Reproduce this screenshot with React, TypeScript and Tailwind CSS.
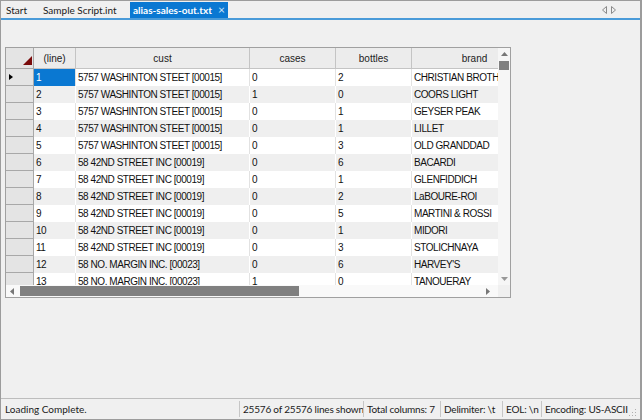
import React from "react";

type Row = [string, string, string, string, string];

const ROWS: Row[] = [
  ["1", "5757 WASHINTON STEET [00015]", "0", "2", "CHRISTIAN BROTHERS"],
  ["2", "5757 WASHINTON STEET [00015]", "1", "0", "COORS LIGHT"],
  ["3", "5757 WASHINTON STEET [00015]", "0", "1", "GEYSER PEAK"],
  ["4", "5757 WASHINTON STEET [00015]", "0", "1", "LILLET"],
  ["5", "5757 WASHINTON STEET [00015]", "0", "3", "OLD GRANDDAD"],
  ["6", "58 42ND STREET INC [00019]", "0", "6", "BACARDI"],
  ["7", "58 42ND STREET INC [00019]", "0", "1", "GLENFIDDICH"],
  ["8", "58 42ND STREET INC [00019]", "0", "2", "LaBOURE-ROI"],
  ["9", "58 42ND STREET INC [00019]", "0", "5", "MARTINI & ROSSI"],
  ["10", "58 42ND STREET INC [00019]", "0", "1", "MIDORI"],
  ["11", "58 42ND STREET INC [00019]", "0", "3", "STOLICHNAYA"],
  ["12", "58 NO. MARGIN INC. [00023]", "0", "6", "HARVEY'S"],
  ["13", "58 NO. MARGIN INC. [00023]", "1", "0", "TANQUERAY"],
];

const COLS = [
  { name: "(line)", w: "w-[42px]" },
  { name: "cust", w: "w-[174px]" },
  { name: "cases", w: "w-[86px]" },
  { name: "bottles", w: "w-[76px]" },
  { name: "brand", w: "w-[126px]" },
];

const ui = "font-['Segoe_UI',Lato,sans-serif]";
const cell = "font-['Liberation_Sans',Arial,sans-serif] text-[10px] tracking-[-0.45px]";

const Grid: React.FC = () => (
  <div className="ml-[4px] mt-[27px] w-[506px] h-[251px] border border-[#a0a0a0] bg-white flex flex-col">
    <div className="flex h-[237px]">
      <div className="w-[492px] overflow-hidden">
        <div className="flex h-[21px] w-max">
          <div className="w-[28px] shrink-0 bg-[#e4e4e4] border-r border-b border-[#a8a8a8] flex items-end justify-end pr-[1px] pb-[3px]">
            <svg width="9" height="9" viewBox="0 0 9 9">
              <polygon points="9,0 9,9 0,9" fill="#7a0b0b" />
            </svg>
          </div>
          {COLS.map((c) => (
            <div
              key={c.name}
              className={`${c.w} shrink-0 bg-[#ececec] border-r border-b border-[#c4c4c4] flex items-center justify-center text-[#222] ${cell} tracking-normal`}
            >
              {c.name}
            </div>
          ))}
        </div>
        {ROWS.map((r, i) => (
          <div key={r[0]} className={`flex h-[17px] w-max ${i % 2 ? "bg-[#efefef]" : "bg-white"}`}>
            <div className="w-[28px] shrink-0 bg-[#e4e4e4] border-r border-b border-[#a8a8a8] flex items-center pl-[3px]">
              {i === 0 && (
                <svg width="4" height="6" viewBox="0 0 4 6">
                  <polygon points="0,0 4,3 0,6" fill="#000" />
                </svg>
              )}
            </div>
            {r.map((v, j) => (
              <div
                key={j}
                className={`${COLS[j].w} shrink-0 border-r ${i % 2 ? "border-white" : "border-[#e2e2e2]"} flex items-center pl-[2px] whitespace-nowrap overflow-hidden ${cell} ${
                  i === 0 && j === 0 ? "bg-[#0a78d2] text-white" : "text-[#111]"
                }`}
              >
                {v}
              </div>
            ))}
          </div>
        ))}
      </div>
      <div className="w-[12px] bg-[#f6f6f6] flex flex-col items-center">
        <svg className="mt-[4px]" width="7" height="4" viewBox="0 0 7 4">
          <polygon points="3.5,0 7,4 0,4" fill="#777" />
        </svg>
        <div className="mt-[5px] w-[10px] h-[9px] bg-[#808080]" />
        <div className="flex-1" />
        <svg className="mb-[4px]" width="7" height="4" viewBox="0 0 7 4">
          <polygon points="0,0 7,0 3.5,4" fill="#999" />
        </svg>
      </div>
    </div>
    <div className="flex h-[12px]">
      <div className="w-[492px] bg-[#f9f9f9] flex items-center">
        <svg className="ml-[4px]" width="4" height="7" viewBox="0 0 4 7">
          <polygon points="4,0 4,7 0,3.5" fill="#777" />
        </svg>
        <div className="ml-[6px] w-[279px] h-[10px] bg-[#808080]" />
        <div className="flex-1" />
        <svg className="mr-[8px]" width="4" height="7" viewBox="0 0 4 7">
          <polygon points="0,0 4,3.5 0,7" fill="#777" />
        </svg>
      </div>
      <div className="w-[12px] bg-[#f0f0f0]" />
    </div>
  </div>
);

const StatusCell: React.FC<{ w: string; children: React.ReactNode }> = ({ w, children }) => (
  <div className={`${w} h-[16px] border-l border-[#c6c6c6] pl-[3px] flex items-center whitespace-nowrap tracking-[-0.2px]`}>
    {children}
  </div>
);

export default function App() {
  return (
    <div className={`w-[642px] h-[420px] bg-[#f0f0f0] border border-r-2 border-[#9c9c9c] flex flex-col text-[#1a1a1a] ${ui}`}>
      <div className="h-[17px] flex items-end text-[10px] whitespace-nowrap">
        <div className="w-[36px] pl-[5px] h-[16px] flex items-center">Start</div>
        <div className="w-[93px] pl-[6px] h-[16px] flex items-center">Sample Script.int</div>
        <div className="w-[98px] pl-[3px] h-[16px] bg-[#0a78d2] text-white font-bold flex items-center">
          <span>alias-sales-out.txt</span>
          <span className="ml-[6px] text-[#cfe4f7] font-normal text-[12px] leading-none">×</span>
        </div>
        <div className="flex-1" />
        <div className="flex items-center gap-[4px] h-[16px] pr-[24px]">
          <svg width="5" height="8" viewBox="0 0 5 8">
            <polygon points="4.5,0.5 4.5,7.5 0.5,4" fill="none" stroke="#8a8a8a" />
          </svg>
          <svg width="5" height="8" viewBox="0 0 5 8">
            <polygon points="0.5,0.5 0.5,7.5 4.5,4" fill="none" stroke="#8a8a8a" />
          </svg>
        </div>
      </div>
      <div className="h-[2px] bg-[#4a9bd9]" />
      <div className="flex-1">
        <Grid />
      </div>
      <div className="h-[21px] border-t border-[#bdbdbd] flex items-center text-[10px]">
        <div className="w-[238px] pl-[4px] whitespace-nowrap">Loading Complete.</div>
        <StatusCell w="w-[124px]">25576 of 25576 lines shown</StatusCell>
        <StatusCell w="w-[77px]">Total columns: 7</StatusCell>
        <StatusCell w="w-[62px]">Delimiter: \t</StatusCell>
        <StatusCell w="w-[39px]">EOL: \n</StatusCell>
        <StatusCell w="w-[88px]">Encoding: US-ASCII</StatusCell>
        <svg className="mt-[8px]" width="8" height="8" viewBox="0 0 8 8">
          <g fill="#b0b0b0">
            <rect x="6" y="0" width="1" height="1" />
            <rect x="3" y="3" width="1" height="1" />
            <rect x="6" y="3" width="1" height="1" />
            <rect x="0" y="6" width="1" height="1" />
            <rect x="3" y="6" width="1" height="1" />
            <rect x="6" y="6" width="1" height="1" />
          </g>
        </svg>
      </div>
    </div>
  );
}
